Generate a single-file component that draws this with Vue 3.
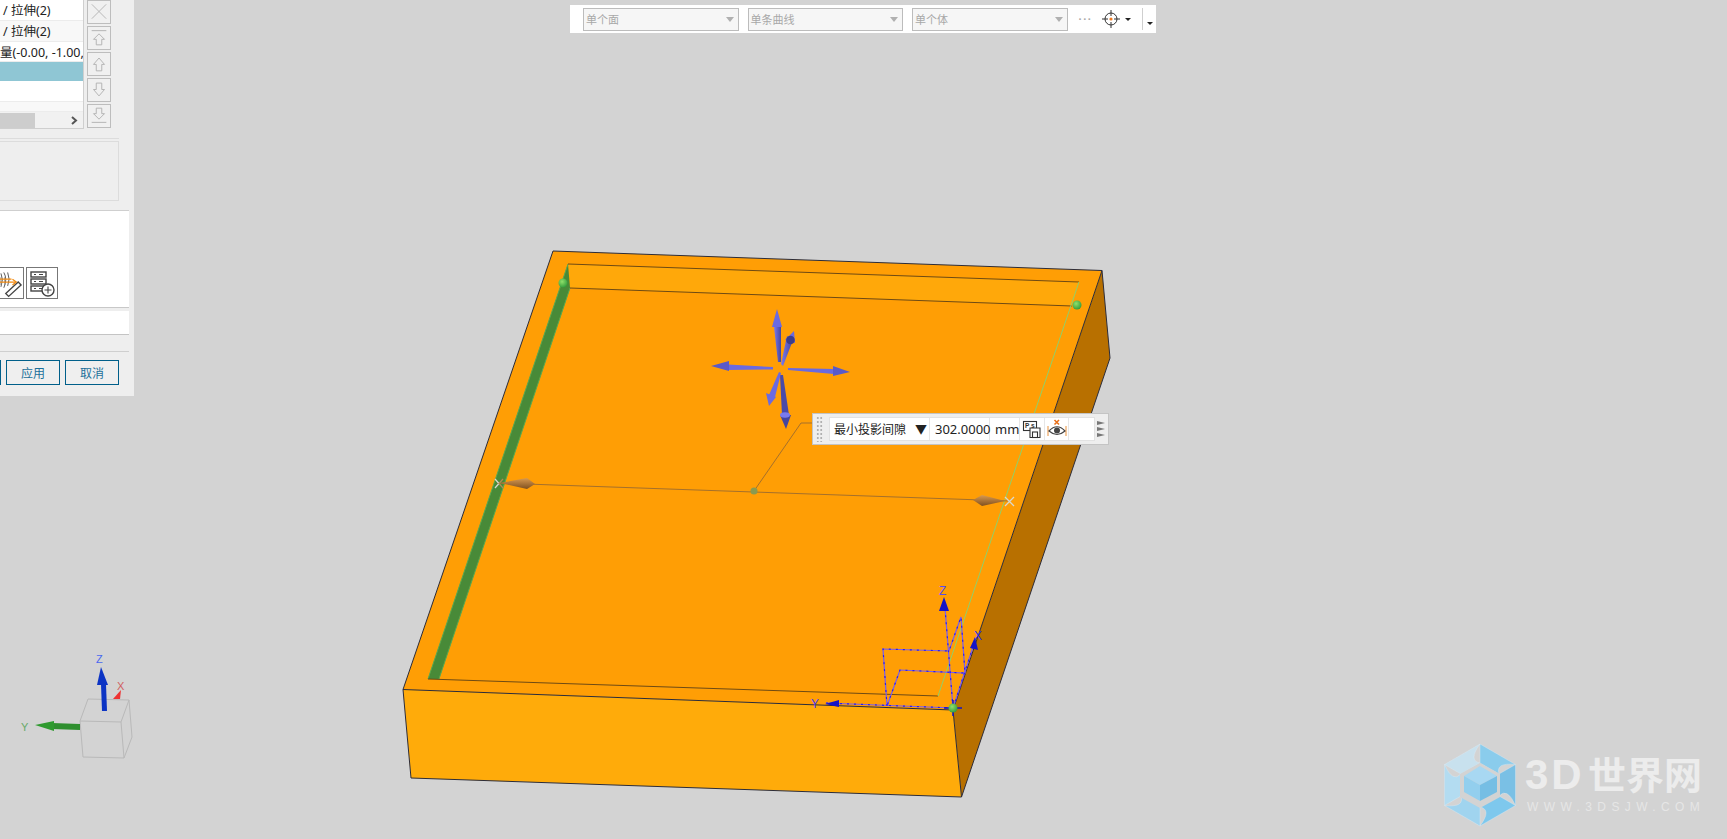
<script setup>
const rows = [
  { text: '/ 拉伸(2)', cls: 'row-a tall' },
  { text: '/ 拉伸(2)', cls: 'row-b tall' },
  { text: '量(-0.00, -1.00,', cls: 'row-a flush' },
  { text: '', cls: 'row-sel' },
  { text: '', cls: 'row-a' },
  { text: '', cls: 'row-b short' }
]
const selects = ['单个面', '单条曲线', '单个体']
const sideArrows = [
  { d: 'M12 8 L18 14 H15 V20 H9 V14 H6 Z', bar: 4.5 },
  { d: 'M12 6 L18 13 H15 V20 H9 V13 H6 Z', bar: 0 },
  { d: 'M12 19 L18 12 H15 V5 H9 V12 H6 Z', bar: 0 },
  { d: 'M12 16 L18 10 H15 V4 H9 V10 H6 Z', bar: 19.5 }
]
const cx = 1480, cy = 785
const hexAt = (r, off = 0) => Array.from({ length: 6 }, (_, i) => {
  const a = (-90 + off + i * 60) * Math.PI / 180
  return [cx + r * Math.cos(a), cy + r * Math.sin(a)]
})
const outer = hexAt(41)
const inner = hexAt(22)
const colors = ['#8accec', '#7ac0e5', '#7ec8ed', '#a0d4ef', '#b3dcf1', '#c8e1ee']
const swirl = outer.map((p, i) => {
  const n = outer[(i + 1) % 6]
  const a = inner[i]
  const b = inner[(i + 1) % 6]
  const c = [(p[0] + b[0]) / 2 + (n[0] - p[0]) * 0.16, (p[1] + b[1]) / 2 + (n[1] - p[1]) * 0.16]
  return {
    fill: colors[i],
    d: `M${p[0]} ${p[1]} L${n[0]} ${n[1]} Q${c[0]} ${c[1]} ${b[0]} ${b[1]} L${a[0]} ${a[1]} Z`
  }
})
</script>

<template>
  <div class="page">
    <svg class="scene" width="1727" height="839" viewBox="0 0 1727 839">
      <defs>
        <radialGradient id="ball" cx="40%" cy="35%" r="70%">
          <stop offset="0" stop-color="#8fe06a" />
          <stop offset="1" stop-color="#2f9a3a" />
        </radialGradient>
        <linearGradient id="bronze" x1="0" y1="0" x2="0" y2="1">
          <stop offset="0" stop-color="#d99a50" />
          <stop offset="1" stop-color="#7f5020" />
        </linearGradient>
        <linearGradient id="violet" x1="0" y1="0" x2="1" y2="0">
          <stop offset="0" stop-color="#7a7aee" />
          <stop offset="1" stop-color="#45459e" />
        </linearGradient>
      </defs>

      <!-- solid -->
      <polygon points="1102,270.5 1110,358 961.5,797 953,710" fill="#b87000" />
      <polygon points="403,689.5 953,710 961.5,797 411,778" fill="#ffab0a" />
      <polygon points="553,251 1102,270.5 953,710 403,689.5" fill="#ff9e05" />
      <polygon points="568,264 1079,282 1072,306 570,288" fill="#ffa80a" />
      <polygon points="568,264 570,288 439,679 428,679" fill="#488a38" />
      <polyline points="568,264 428,679" fill="none" stroke="#58a850" stroke-width="1" />
      <polyline points="570,288 439,679" fill="none" stroke="#58a850" stroke-width="1" />
      <g fill="none" stroke="#2c2c38" stroke-width="1">
        <polygon points="553,251 1102,270.5 1110,358 961.5,797 411,778 403,689.5" />
        <polyline points="403,689.5 953,710 961.5,797" />
        <line x1="953" y1="710" x2="1102" y2="270.5" />
      </g>
      <g fill="none" stroke="#6e4a14" stroke-width="1">
        <polyline points="428,679 938,696" />
        <polyline points="568,264 1079,282" />
        <polyline points="570,288 1072,306" />
      </g>
      <line x1="938" y1="696" x2="1079" y2="282" stroke="#8fd06a" stroke-width="1" />

      <!-- measure -->
      <g fill="none" stroke="#a5702c" stroke-width="1">
        <line x1="497" y1="483" x2="1010" y2="501" />
        <polyline points="754,491 801,423 813,423" />
      </g>
      <polygon points="500,483 527,478 535,484 527,489" fill="url(#bronze)" />
      <polygon points="973,500 982,495 1005,501 982,506" fill="url(#bronze)" />
      <g fill="none" stroke-width="1.3">
        <path d="M495 479 L499 483.5 L495 488" stroke="#d8d8d0" />
        <path d="M503 479 L499 483.5 L503 488" stroke="#b08a58" />
        <path d="M1005 497 L1014 506 M1014 497 L1005 506" stroke="#d8d8d0" />
      </g>
      <circle cx="754" cy="491" r="3.5" fill="#8a9a50" />

      <!-- move handles -->
      <g fill="url(#violet)">
        <polygon points="778,362 781,362 781,327 774,327" />
        <polygon points="777,309 772,327 782,327" fill="#6a6ae0" />
        <polygon points="781,364 783,366 793,340 787,336" />
        <polygon points="794,331 785,340 795,343" fill="#6a6ae0" />
        <circle cx="790.5" cy="340" r="4.3" fill="#3c3c8c" />
        <polygon points="773,367 773,369.5 728,370 728,364.5" fill="#6a6ae0" />
        <polygon points="711,366 729,361 729,371" fill="#5a5ac8" />
        <polygon points="788,368 788,370 834,374 834,369" fill="#6a6ae0" />
        <polygon points="850,372 833,366 833,376" fill="#5a5ac8" />
        <polygon points="780,375 783,375 789,415 782,415" fill="#4a4aa8" />
        <polygon points="786,429 780,415 791,415" fill="#45459e" />
        <ellipse cx="785" cy="415" rx="5" ry="2.8" fill="#7a7aee" />
        <polygon points="779,372 781,373 775,397 769,395" fill="#6a6ae0" />
        <polygon points="769,406 766,393 776,397" fill="#6a6ae0" />
      </g>

      <!-- work csys -->
      <g fill="none" stroke-width="1.2">
        <g stroke="#7a5cf0">
          <polyline points="826,703 953,708" />
          <line x1="953" y1="708" x2="945" y2="608" />
          <line x1="953" y1="708" x2="973" y2="647" />
          <polyline points="887,706 883,649 949,651 961,617 965,673 900,670 887,706" />
        </g>
        <g stroke="#2a20f0" stroke-dasharray="2 5">
          <polyline points="826,703 953,708" />
          <line x1="953" y1="708" x2="945" y2="608" />
          <line x1="953" y1="708" x2="973" y2="647" />
          <polyline points="887,706 883,649 949,651 961,617 965,673 900,670 887,706" />
        </g>
      </g>
      <polygon points="825,704 839,700 839,707" fill="#1414c8" />
      <polygon points="944,597 939,611 949,611" fill="#1414c8" />
      <polygon points="975,637 970,648 978,650" fill="#1414c8" />
      <text class="lab" x="811" y="708" fill="#4a3cf0">Y</text>
      <text class="lab" x="939" y="595" fill="#5a4cf0">Z</text>
      <text class="lab" x="974" y="640" fill="#2a2af0">X</text>
      <path d="M944 708 H962 M953 700 V716" stroke="#1414c8" stroke-width="1.5" />

      <!-- green points -->
      <circle cx="563" cy="283" r="4.5" fill="url(#ball)" />
      <circle cx="1077" cy="305" r="4.5" fill="url(#ball)" />
      <circle cx="953" cy="708" r="4.5" fill="url(#ball)" />

      <!-- view triad -->
      <g fill="none" stroke="#b9b9b9" stroke-width="1">
        <polygon points="80,721 121,722 124,758 83,757" />
        <polyline points="80,721 88,699 129,700 121,722" />
        <polyline points="129,700 132,737 124,758" />
      </g>
      <polygon points="113,699 121,690 120,699" fill="#ee3333" />
      <polygon points="80,724 52,723 52,729 80,730" fill="#2f8f2f" />
      <polygon points="35,725 54,721 54,731" fill="#2f9a2f" />
      <polygon points="102,711 107,711 106,684 101,684" fill="#0c34c4" />
      <polygon points="101,667 97,685 108,685" fill="#0c34c4" />
      <text class="lab small" x="96" y="663" fill="#4a68f0">Z</text>
      <text class="lab small" x="117" y="690" fill="#d06060">X</text>
      <text class="lab small" x="21" y="731" fill="#6aaa6a">Y</text>

      <!-- watermark -->
      <g stroke="#dcecf4" stroke-width="0.4">
        <path v-for="(s, i) in swirl" :key="i" :d="s.d" :fill="s.fill" />
      </g>
      <polygon points="1480,763 1500,774 1500,797 1480,808 1460,797 1460,774" fill="#d3d3d3" />
      <polygon points="1480,766 1497,776 1480,785 1464,776" fill="#a8d8f2" />
      <polygon points="1464,776 1480,785 1480,801 1464,792" fill="#93cfee" />
      <polygon points="1497,776 1480,785 1480,801 1497,792" fill="#76bee4" />
      <text class="wm-big" y="789">
        <tspan class="wm-latin" x="1525">3D</tspan>
        <tspan x="1588">世界网</tspan>
      </text>
      <text class="wm-small" x="1527" y="811">WWW.3DSJW.COM</text>
    </svg>

    <!-- dialog -->
    <aside class="panel">
      <section class="list-area">
        <div class="list-box">
          <div v-for="(r, i) in rows" :key="i" class="row" :class="r.cls">{{ r.text }}</div>
          <div class="hscroll">
            <span class="thumb"></span>
            <svg class="chev" width="7" height="9" viewBox="0 0 7 9">
              <path d="M1 1 L5 4.5 L1 8" fill="none" stroke="#555" stroke-width="2" />
            </svg>
          </div>
        </div>
        <div class="side-btns">
          <button class="side-btn">
            <svg width="23" height="23" viewBox="0 0 23 23"><path d="M4 4 L19 19 M19 4 L4 19" stroke="#b5b5b5" fill="none" /></svg>
          </button>
          <button v-for="(a, i) in sideArrows" :key="i" class="side-btn">
            <svg width="23" height="23" viewBox="0 0 24 24">
              <path :d="a.d" fill="none" stroke="#b0b0b0" />
              <path v-if="a.bar" :d="`M4 ${a.bar} H20`" stroke="#b0b0b0" />
            </svg>
          </button>
        </div>
      </section>
      <div class="info-box"></div>
      <section class="white-block">
        <div class="icon-row">
          <span class="icon-btn clipped">
            <svg width="24" height="30" viewBox="0 0 24 30">
              <g fill="none" stroke="#555" stroke-width="1">
                <path d="M1 5 Q4 11 1 19 M4 4 Q8 11 4 20 M8 4 Q11 11 8 18" />
                <path d="M1 9 V17 M5 9 V17" stroke="#888" />
                <path d="M6 26 L19 14 L22 17 L9 29 Z" stroke="#444" stroke-width="1.4" />
              </g>
              <path d="M0 11 H12 M0 14 H16" stroke="#f28a10" stroke-width="1.3" />
              <path d="M13 11 L17 14 L13 17" fill="none" stroke="#f28a10" stroke-width="1.3" />
            </svg>
          </span>
          <span class="icon-btn">
            <svg width="30" height="30" viewBox="0 0 30 30">
              <g fill="none" stroke="#444" stroke-width="1.4">
                <rect x="4" y="4" width="15" height="5" />
                <rect x="4" y="11" width="15" height="5" />
                <rect x="4" y="18" width="15" height="5" />
                <path d="M7 6.5 H9 M12 6.5 H16 M7 13.5 H9 M12 13.5 H16 M7 20.5 H9 M12 20.5 H16" stroke-width="1" />
                <circle cx="21" cy="22" r="6" fill="#fff" />
                <path d="M17.5 22 H24.5 M21 18.5 V25.5" stroke-width="1.1" />
              </g>
            </svg>
          </span>
        </div>
      </section>
      <div class="white-strip"></div>
      <footer class="actions">
        <button class="act ghost"></button>
        <button class="act">应用</button>
        <button class="act">取消</button>
      </footer>
    </aside>

    <!-- selection bar -->
    <nav class="selbar">
      <div v-for="s in selects" :key="s" class="sel">
        <span>{{ s }}</span>
        <i class="sel-caret"></i>
      </div>
      <span class="dots">···</span>
      <svg class="target" width="18" height="18" viewBox="0 0 18 18">
        <g fill="none" stroke="#333" stroke-width="1">
          <circle cx="9" cy="9" r="6" />
          <path d="M9 0 V6 M9 12 V18 M0 9 H6 M12 9 H18" />
        </g>
        <circle cx="9" cy="9" r="1.6" fill="#ee7a20" />
      </svg>
      <i class="tiny-caret"></i>
      <span class="sep"></span>
      <i class="tiny-caret low"></i>
    </nav>

    <!-- on-screen input -->
    <div class="osi">
      <div class="grip"></div>
      <div class="osi-body">
        <div class="cell label">最小投影间隙<span class="tri">▼</span></div>
        <div class="cell value">302.0000</div>
        <div class="cell unit">mm</div>
        <div class="cell ic">
          <svg width="20" height="20" viewBox="0 0 20 20">
            <g fill="none" stroke="#333" stroke-width="1.1">
              <rect x="1.5" y="2.5" width="13" height="9" />
              <path d="M8 9 H18 V18.5 H8 Z" fill="#fff" />
              <rect x="10.5" y="13" width="5" height="5.5" />
            </g>
            <text class="pf" x="3" y="9">P</text>
            <text class="pf" x="9" y="9">s</text>
          </svg>
        </div>
        <div class="cell ic wide">
          <svg width="20" height="20" viewBox="0 0 20 20">
            <path d="M7.5 1 L12 5.5 M12 1 L7.5 5.5" stroke="#e8701a" stroke-width="1.6" />
            <path d="M1 7 V17 M19 7 V17" stroke="#e8903a" />
            <path d="M2 12 Q10 3.5 18 12 Q10 19 2 12 Z" fill="none" stroke="#444" stroke-width="1.2" />
            <circle cx="10" cy="11.5" r="3" fill="#444" />
          </svg>
        </div>
        <div class="cell blank"></div>
      </div>
      <div class="osi-arrows">
        <i></i><i></i><i></i>
      </div>
    </div>
  </div>
</template>

<style scoped>
.page {
  position: relative;
  width: 1727px;
  height: 839px;
  overflow: hidden;
  background: #d3d3d3;
  font-family: "Noto Sans", "Noto Sans CJK SC", sans-serif;
}
.scene { display: block; }
.lab { font: 12px "Liberation Sans", sans-serif; }
.lab.small { font-size: 11px; }
.wm-big {
  font-family: "Liberation Sans", "Noto Sans CJK SC", sans-serif;
  font-size: 38px;
  font-weight: 700;
  fill: #ececec;
}
.wm-latin { font-size: 42px; letter-spacing: 3px; }
.wm-small {
  font-family: "Liberation Sans", sans-serif;
  font-size: 12px;
  letter-spacing: 5.4px;
  fill: #e6e6e6;
}

/* dialog */
.panel {
  position: absolute;
  left: 0;
  top: 0;
  width: 134px;
  height: 396px;
  display: flex;
  flex-direction: column;
  background: #eeeeee;
  font-size: 12.5px;
  color: #222;
}
.list-area {
  display: flex;
  gap: 3px;
  width: 119px;
  height: 138px;
  border-bottom: 1px solid #dcdcdc;
}
.list-box {
  width: 84px;
  height: 129px;
  box-sizing: border-box;
  background: #fff;
  border: 1px solid #cfcfcf;
  border-left: 0;
  border-top: 0;
  display: flex;
  flex-direction: column;
  overflow: hidden;
}
.row {
  flex: none;
  height: 20px;
  line-height: 19px;
  padding: 1px 0 0 3px;
  white-space: nowrap;
  overflow: hidden;
  box-sizing: border-box;
  border-bottom: 1px solid #ececec;
}
.row.tall { height: 21px; line-height: 20px; }
.row.flush { padding-left: 0; }
.row-a { background: #fff; }
.row-b { background: #f8f8f8; }
.row-sel { background: #8fc6d4; border-bottom: 1px solid #fff; }
.row.short { height: 10px; }
.hscroll {
  flex: none;
  display: flex;
  align-items: center;
  justify-content: space-between;
  height: 16px;
  background: #f1f1f1;
}
.thumb { width: 35px; height: 15px; background: #cdcdcd; }
.chev { margin-right: 5px; }
.side-btns { display: flex; flex-direction: column; gap: 2.5px; }
.side-btn {
  width: 24px;
  height: 23.5px;
  padding: 0;
  box-sizing: border-box;
  background: #f0f0f0;
  border: 1px solid #bdbdbd;
  display: flex;
  align-items: center;
  justify-content: center;
}
.info-box {
  width: 119px;
  height: 60px;
  margin-top: 2px;
  box-sizing: border-box;
  background: #eeeeee;
  border: 1px solid #dcdcdc;
  border-left: 0;
}
.white-block {
  width: 129px;
  height: 98px;
  margin-top: 9px;
  box-sizing: border-box;
  background: #fff;
  border-top: 1px solid #cfcfcf;
  border-bottom: 1px solid #c8c8c8;
  display: flex;
  align-items: flex-end;
}
.icon-row { display: flex; gap: 2px; margin-bottom: 8px; }
.icon-btn {
  width: 32px;
  height: 32px;
  box-sizing: border-box;
  border: 1px solid #777;
  display: flex;
  align-items: center;
  justify-content: center;
}
.icon-btn.clipped { width: 24px; border-left: 0; }
.white-strip {
  width: 129px;
  height: 24px;
  margin-top: 3px;
  box-sizing: border-box;
  background: #fff;
  border-bottom: 1px solid #c4c4c4;
}
.actions {
  width: 129px;
  margin-top: 16px;
  padding-top: 8px;
  border-top: 1px solid #cfcfcf;
  display: flex;
  gap: 5px;
  box-sizing: border-box;
}
.act {
  width: 54px;
  height: 25px;
  padding: 0;
  box-sizing: border-box;
  background: #efefef;
  border: 1px solid #005f8a;
  color: #1b6f9a;
  font: 12px "Noto Sans CJK SC", sans-serif;
}
.act.ghost { width: 1px; border-left: 0; }

/* selection bar */
.selbar {
  position: absolute;
  left: 570px;
  top: 5px;
  width: 586px;
  height: 28px;
  box-sizing: border-box;
  padding: 3px 0 3px 13px;
  background: #fff;
  display: flex;
  align-items: center;
}
.sel {
  flex: none;
  width: 155.5px;
  height: 23px;
  margin-right: 9px;
  box-sizing: border-box;
  padding: 0 4px 0 2px;
  display: flex;
  align-items: center;
  justify-content: space-between;
  background: #f6f6f6;
  border: 1px solid #bcbcbc;
  font-size: 11px;
  color: #a8a8a8;
}
.sel-caret {
  width: 0;
  height: 0;
  border: 4px solid transparent;
  border-top: 5px solid #b0b0b0;
  border-bottom: 0;
}
.dots { margin-left: 2px; width: 22px; font: 700 11px "Liberation Sans", sans-serif; color: #aaa; letter-spacing: 1px; }
.target { margin-left: 1px; }
.tiny-caret {
  width: 0;
  height: 0;
  margin-left: 5px;
  border: 3px solid transparent;
  border-top: 3px solid #222;
  border-bottom: 0;
}
.tiny-caret.low { margin-left: 4px; margin-top: 9px; }
.sep { width: 1px; height: 22px; margin-left: 11px; background: #cfcfcf; }

/* on-screen input */
.osi {
  position: absolute;
  left: 812px;
  top: 413px;
  width: 297px;
  height: 32px;
  box-sizing: border-box;
  display: flex;
  align-items: center;
  background: #eeeeee;
  border: 1px solid #c4c4c4;
  font-size: 13px;
  color: #222;
}
.grip {
  width: 7px;
  height: 26px;
  margin: 0 6px 0 3px;
  background-image: radial-gradient(circle, #b0b0b0 1.2px, transparent 1.4px);
  background-size: 3.5px 4px;
}
.osi-body {
  width: 266px;
  height: 24px;
  box-sizing: border-box;
  background: #fff;
  border: 1px solid #e2e2e2;
  display: flex;
}
.cell {
  flex: none;
  height: 100%;
  box-sizing: border-box;
  border-right: 1px solid #e6e6e6;
  display: flex;
  align-items: center;
  white-space: nowrap;
}
.label { width: 100px; padding-left: 4px; font-size: 12px; }
.tri { margin-left: 9px; font-size: 12px; }
.value { width: 60px; padding-left: 5px; }
.unit { width: 30px; padding-left: 5px; }
.ic { width: 25px; justify-content: center; }
.ic.wide { width: 24px; }
.blank { border-right: 0; flex: 1; }
.pf { font: 700 6.5px "Liberation Sans", sans-serif; fill: #333; }
.osi-arrows {
  margin-left: 2px;
  display: flex;
  flex-direction: column;
  gap: 2px;
}
.osi-arrows i {
  width: 0;
  height: 0;
  border-left: 8px solid #777;
  border-top: 2.5px solid transparent;
  border-bottom: 2.5px solid transparent;
}
</style>

<style>
html, body { margin: 0; overflow: hidden; background: #d3d3d3; }
</style>
